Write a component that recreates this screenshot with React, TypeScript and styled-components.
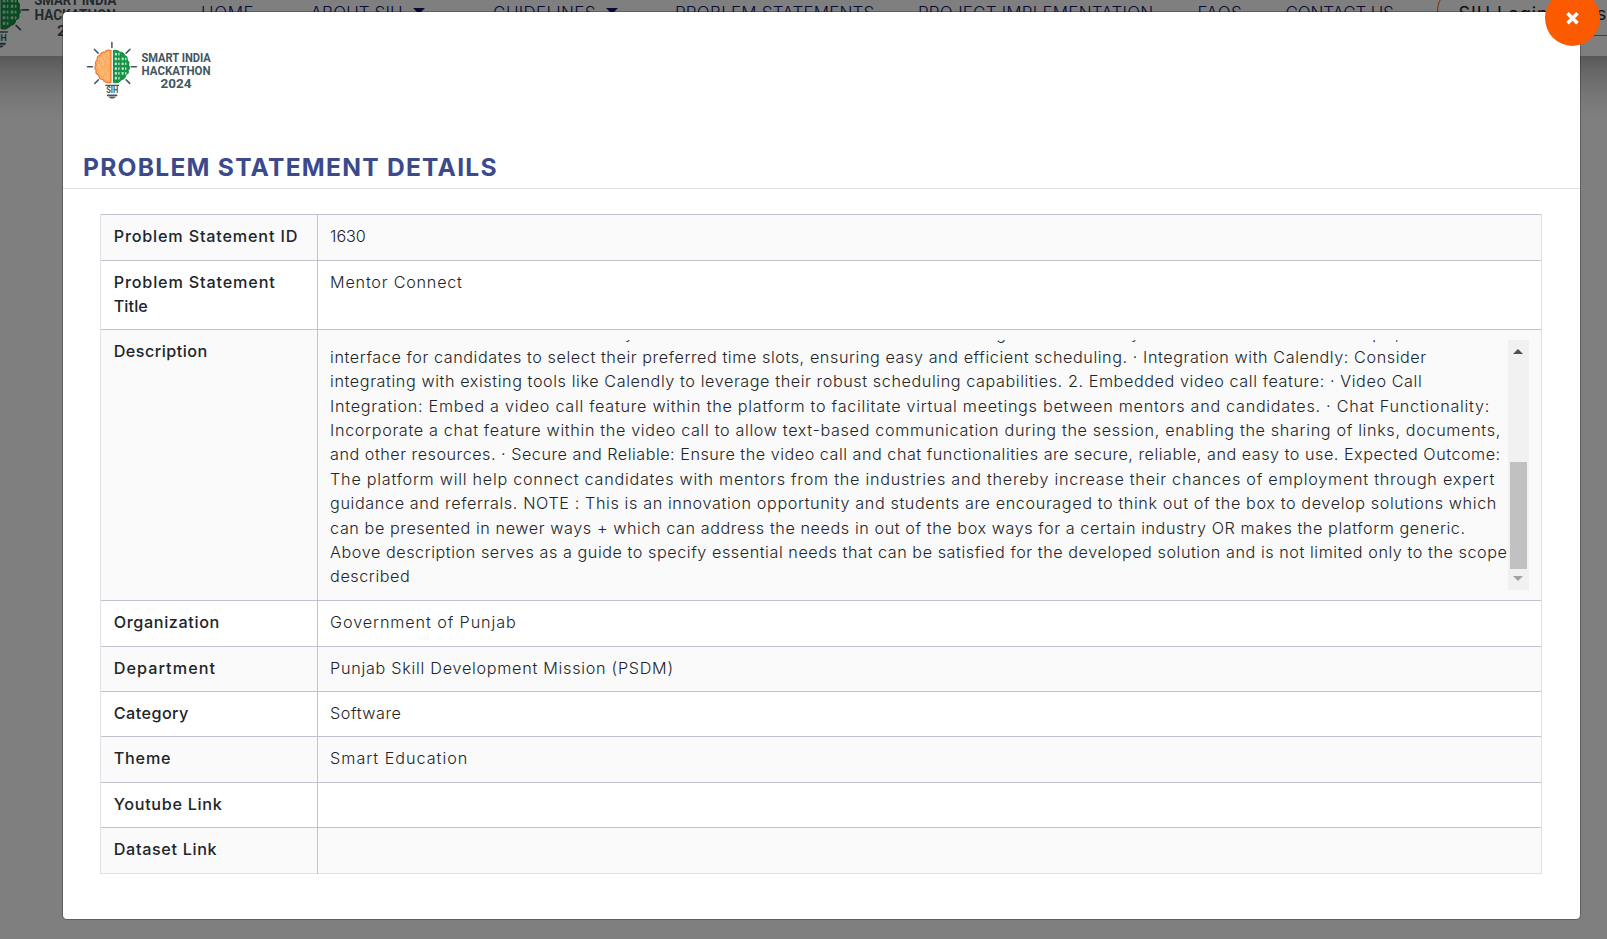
import React from "react";
import styled, { createGlobalStyle } from "styled-components";

const GlobalStyle = createGlobalStyle`
  *, *::before, *::after { box-sizing: border-box; }
  html, body { margin: 0; height: 100%; }
  body {
    font-family: Inter, "Open Sans", sans-serif;
    color: #212529;
    background: #fff;
    overflow: hidden;
  }
`;

const Page = styled.div`
  position: relative;
  width: 100%;
  height: 100vh;
  overflow: hidden;
`;

const TopBar = styled.header`
  display: flex;
  align-items: flex-start;
  height: 56px;
  background: #fff;
  overflow: hidden;
`;

const BarShadow = styled.div`
  height: 64px;
  background: linear-gradient(#b2b2b2, #d2d2d2 28%, #f2f2f2 68%, #fff);
`;

const BarLogo = styled.div`
  flex: none;
  width: 156px;
  height: 78px;
  margin: -24.4px 0 0 -36px;
`;

const Nav = styled.nav`
  flex: none;
  display: grid;
  grid-template-columns: 109.5px 182.5px 182px 243px 279.5px 88px 151.5px 260px;
  margin-left: 81px;
  font-size: 17px;
  font-weight: 300;
  line-height: 20px;
  color: #0e176c;
  white-space: nowrap;
`;

const NavItem = styled.a<{ $track?: number }>`
  display: flex;
  align-items: center;
  gap: 10.5px;
  height: 20px;
  margin-top: 3px;
  letter-spacing: ${(p) => p.$track ?? 0}px;
`;

const Caret = styled.span`
  border: 6px solid transparent;
  border-top-color: currentColor;
  border-bottom: 0;
  margin-top: -4px;
`;

const LoginButton = styled.a`
  height: 50px;
  margin-top: -14px;
  padding: 15.5px 0 0 20.5px;
  border: 1px solid #fa5a00;
  border-radius: 25px;
  font-size: 18px;
  font-weight: 400;
  line-height: 22px;
  letter-spacing: 0.9px;
  color: #212121;
`;

const Backdrop = styled.div`
  position: absolute;
  inset: 0;
  display: flex;
  align-items: flex-start;
  padding: 11px 0 0 62px;
  background: rgba(0, 0, 0, 0.5);
`;

const Dialog = styled.section`
  position: relative;
  width: 1519px;
  height: 909px;
  background: #fff;
  background-clip: padding-box;
  border: 1px solid rgba(0, 0, 0, 0.25);
  border-radius: 5px;
`;

const CloseButton = styled.button`
  position: absolute;
  top: -22px;
  right: -20px;
  width: 55px;
  height: 56px;
  padding: 0;
  border: 0;
  border-radius: 50%;
  background: #fb5a00;
  display: grid;
  place-items: center;
`;

const DialogHeader = styled.div`
  display: flex;
  flex-direction: column;
  justify-content: space-between;
  height: 177px;
  padding: 26px 19px 5px;
  border-bottom: 1px solid #dee2e6;
`;

const DialogLogo = styled.div`
  width: 132px;
  height: 66px;
`;

const Title = styled.h5`
  margin: 0 0 0 1px;
  font-size: 24.6px;
  line-height: 32px;
  font-weight: 650;
  letter-spacing: 1.24px;
  color: #3b4a8c;
`;

const DetailsTable = styled.div`
  width: 1442px;
  margin: 25px 0 0 37px;
  border: 1px solid #dee2e6;
  border-top: 0;
`;

const Row = styled.div<{ $height: number; $striped?: boolean }>`
  display: grid;
  grid-template-columns: 217px 1fr;
  height: ${(p) => p.$height}px;
  border-top: 1px solid #bfc3cb;
  background: ${(p) => (p.$striped ? "#fafafa" : "#fff")};
  font-size: 16.2px;
  line-height: 24.4px;
  &:last-child > :first-child { margin-bottom: -1px; }
`;

const LabelCell = styled.div`
  padding: 8.5px 12.7px 0;
  border-right: 1px solid #bfc3cb;
  font-weight: 500;
`;

const ValueCell = styled.div`
  padding: 8.5px 12px 0 12.1px;
  font-weight: 300;
`;

const Text = styled.div<{ $track: number }>`
  flex: none;
  height: 24.375px;
  white-space: pre;
  letter-spacing: ${(p) => p.$track}px;
`;

const DescriptionBox = styled.div`
  display: grid;
  grid-template-columns: 1fr 21.5px;
  height: 250px;
  margin-top: 1px;
  overflow: hidden;
`;

const DescriptionText = styled.div`
  display: flex;
  flex-direction: column;
  justify-content: flex-end;
  min-height: 0;
  padding-bottom: 0.8px;
  overflow: hidden;
`;

const PartialLine = styled.div`
  flex: none;
  display: grid;
  grid-template-columns: 304px 372px 134px 225px auto;
  height: 24.375px;
  text-align: right;
  white-space: nowrap;
  letter-spacing: 0;
`;

const ScrollTrack = styled.div`
  display: flex;
  flex-direction: column;
  align-items: center;
  background: #f1f1f1;
`;

const ScrollArrow = styled.span<{ $down?: boolean }>`
  border: 5px solid transparent;
  ${(p) =>
    p.$down
      ? "border-top-color: #a3a3a3; border-bottom: 0; margin-top: 7px;"
      : "border-bottom-color: #505050; border-top: 0; margin-top: 9px;"}
`;

const ScrollThumb = styled.span`
  width: 17px;
  height: 107px;
  margin-top: 108px;
  background: #c1c1c1;
`;

const INK = "#425761";

function SihLogo() {
  const cells: React.ReactNode[] = [];
  for (let r = 0; r < 6; r++) {
    for (let c = 0; c < 4; c++) {
      if ((r === 0 || r === 5) && c > 1) continue;
      cells.push(
        <rect key={`${r}-${c}`} x={32.8 + c * 3.4} y={14.8 + r * 4.8} width={c % 2 ? 1.4 : 2.2} height="2.7" rx="0.6" />
      );
    }
  }
  const brain =
    "M29 12.5 C26 11.7 23.5 12.8 22.7 14.2 C20.2 13.8 18.2 15.4 17.9 17.4 C15.5 18 14.6 20.1 15.3 22 C13.3 23.2 13 25.4 14 27 C12.4 28.6 12.5 31 14.2 32.3 C13.4 34.6 14.8 36.5 16.7 37.2 C16.9 40 18.8 41.4 20.8 41.5 C22.2 44.2 26 45.6 29 44.4 Z";
  return (
    <svg width="100%" height="100%" viewBox="0 0 132 66">
      <path d={brain} fill="#fbad63" stroke="#f6772b" strokeWidth="1.2" />
      <path
        d="M26 15v4M22 17v3l4 3v4M18 20l3 3v5M17 26v4l4 3v4M25 29l-2 3 3 3v7M19 34v3M23 38v3"
        fill="none"
        stroke="#fdd3a4"
        strokeWidth="1"
        strokeDasharray="1.4 0.9"
      />
      <g transform="translate(60.4 0) scale(-1 1)">
        <path d={brain} fill="#159447" stroke="#0d8a3c" strokeWidth="1" />
      </g>
      <g fill="#b9e2c5">{cells}</g>
      <g stroke={INK} strokeWidth="1.5" strokeLinecap="round">
        <path d="M29.9 4.5V9.4M12.3 11.3l3.8 3.8M48 11.3l-3.8 3.8M5.5 28.7h5M49.2 28.7h5.2M12.8 45.4l3.7-3.7M47.7 45.4l-3.5-3.5" />
      </g>
      <path d="M23.2 46.7h13.8v1.4H23.2zM25 56.4h10.3v1.8H25zM26.6 58.8h7.2c-1 2.4-6.2 2.4-7.2 0z" fill={INK} />
      <g fill={INK} fontFamily="Roboto, sans-serif" fontWeight="700">
        <text x="24.2" y="55.4" fontSize="8.4" textLength="12" lengthAdjust="spacingAndGlyphs">SIH</text>
        <g fontSize="12.2">
          <text x="59.4" y="24.4" textLength="69.4" lengthAdjust="spacingAndGlyphs">SMART INDIA</text>
          <text x="59.6" y="37.4" textLength="69" lengthAdjust="spacingAndGlyphs">HACKATHON</text>
          <text x="78.6" y="50.4" textLength="31" lengthAdjust="spacingAndGlyphs">2024</text>
        </g>
      </g>
    </svg>
  );
}

type Line = [text: string, track: number];

const description: Line[] = [
  ["interface for candidates to select their preferred time slots, ensuring easy and efficient scheduling. · Integration with Calendly: Consider", 0.574],
  ["integrating with existing tools like Calendly to leverage their robust scheduling capabilities. 2. Embedded video call feature: · Video Call", 0.584],
  ["Integration: Embed a video call feature within the platform to facilitate virtual meetings between mentors and candidates. · Chat Functionality:", 0.72],
  ["Incorporate a chat feature within the video call to allow text-based communication during the session, enabling the sharing of links, documents,", 0.652],
  ["and other resources. · Secure and Reliable: Ensure the video call and chat functionalities are secure, reliable, and easy to use. Expected Outcome:", 0.51],
  ["The platform will help connect candidates with mentors from the industries and thereby increase their chances of employment through expert", 0.738],
  ["guidance and referrals. NOTE : This is an innovation opportunity and students are encouraged to think out of the box to develop solutions which", 0.612],
  ["can be presented in newer ways + which can address the needs in out of the box ways for a certain industry OR makes the platform generic.", 0.574],
  ["Above description serves as a guide to specify essential needs that can be satisfied for the developed solution and is not limited only to the scope", 0.552],
  ["described", 0.56],
];

interface RowData {
  height: number;
  label: Line[];
  value?: Line;
}

const rowsBefore: RowData[] = [
  { height: 46, label: [["Problem Statement ID", 0.82]], value: ["1630", -0.05] },
  { height: 69, label: [["Problem Statement", 0.84], ["Title", 0.1]], value: ["Mentor Connect", 0.77] },
];

const rowsAfter: RowData[] = [
  { height: 46, label: [["Organization", 0.63]], value: ["Government of Punjab", 0.89] },
  { height: 45, label: [["Department", 1.07]], value: ["Punjab Skill Development Mission (PSDM)", 0.72] },
  { height: 45, label: [["Category", 0.45]], value: ["Software", 0.52] },
  { height: 46, label: [["Theme", 0.8]], value: ["Smart Education", 0.98] },
  { height: 45, label: [["Youtube Link", 0.69]] },
  { height: 46, label: [["Dataset Link", 0.66]] },
];

function DetailRow({ row, striped }: { row: RowData; striped: boolean }) {
  return (
    <Row $height={row.height} $striped={striped}>
      <LabelCell>
        {row.label.map(([text, track]) => (
          <Text key={text} $track={track}>{text}</Text>
        ))}
      </LabelCell>
      <ValueCell>{row.value && <Text $track={row.value[1]}>{row.value[0]}</Text>}</ValueCell>
    </Row>
  );
}

export default function App() {
  return (
    <Page>
      <GlobalStyle />
      <TopBar>
        <BarLogo><SihLogo /></BarLogo>
        <Nav>
          <NavItem $track={0.6}>HOME</NavItem>
          <NavItem $track={0.1}>ABOUT SIH <Caret /></NavItem>
          <NavItem $track={0.3}>GUIDELINES <Caret /></NavItem>
          <NavItem $track={0.19}>PROBLEM STATEMENTS</NavItem>
          <NavItem $track={0.2}>PROJECT IMPLEMENTATION</NavItem>
          <NavItem $track={0.4}>FAQS</NavItem>
          <NavItem $track={-0.15}>CONTACT US</NavItem>
          <LoginButton>SIH Login/Register</LoginButton>
        </Nav>
      </TopBar>
      <BarShadow />
      <Backdrop>
        <Dialog>
          <CloseButton aria-label="Close">
            <svg width="15" height="15" viewBox="0 0 15 15">
              <path d="M2.5 2.2l10 10M12.5 2.2l-10 10" stroke="#fff" strokeWidth="3.6" />
            </svg>
          </CloseButton>
          <DialogHeader>
            <DialogLogo><SihLogo /></DialogLogo>
            <Title>PROBLEM STATEMENT DETAILS</Title>
          </DialogHeader>
          <DetailsTable>
            {rowsBefore.map((row, i) => (
              <DetailRow key={i} row={row} striped={i % 2 === 0} />
            ))}
            <Row $height={271} $striped>
              <LabelCell><Text $track={0.47}>Description</Text></LabelCell>
              <ValueCell>
                <DescriptionBox>
                  <DescriptionText>
                    <PartialLine>
                      <span>calendar for mentors to set availability</span>
                      <span>and the hours at which one can book a meeting</span>
                      <span>· User Friendly</span>
                      <span>Interface: Offer a clear and simple,</span>
                      <span>intuitive</span>
                    </PartialLine>
                    {description.map(([text, track]) => (
                      <Text key={text} $track={track}>{text}</Text>
                    ))}
                  </DescriptionText>
                  <ScrollTrack>
                    <ScrollArrow />
                    <ScrollThumb />
                    <ScrollArrow $down />
                  </ScrollTrack>
                </DescriptionBox>
              </ValueCell>
            </Row>
            {rowsAfter.map((row, i) => (
              <DetailRow key={i} row={row} striped={i % 2 === 1} />
            ))}
          </DetailsTable>
        </Dialog>
      </Backdrop>
    </Page>
  );
}
